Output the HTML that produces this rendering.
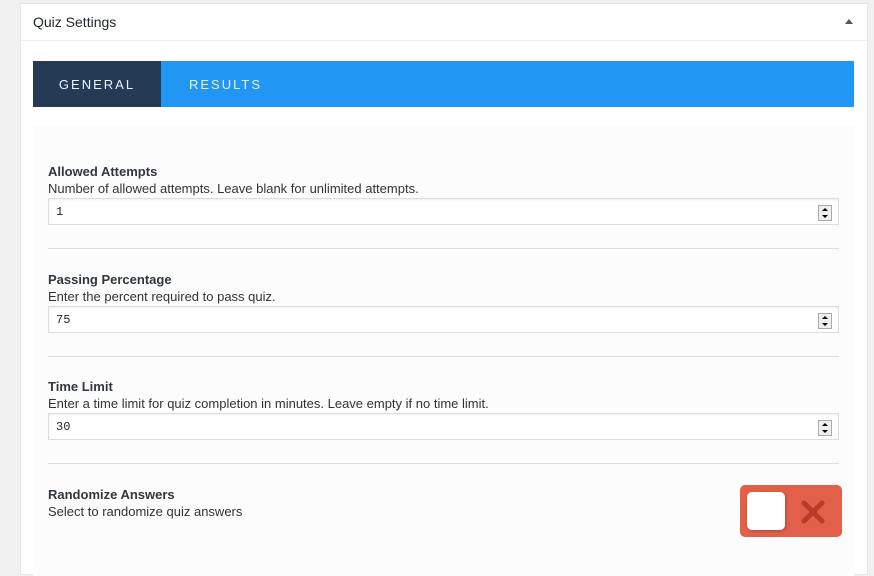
<!DOCTYPE html>
<html><head><style>
body{margin:0;background:#f1f1f1;font-family:"Liberation Sans",sans-serif;color:#23282d;width:874px;height:561px;overflow:hidden;position:relative}
.panel{position:absolute;left:20px;top:3px;width:846px;height:570px;background:#fff;border:1px solid #e5e5e5}
.hd{height:36px;border-bottom:1px solid #eee;font-size:14px;line-height:37px;padding-left:12px}
.arrow{position:absolute;right:14px;top:15px;width:0;height:0;border-left:4px solid transparent;border-right:4px solid transparent;border-bottom:5px solid #555}
.tabs{position:absolute;left:12px;top:57px;width:821px;height:46px;background:#2196f3}
.tab{position:absolute;top:0;height:46px;line-height:47px;font-size:13px;letter-spacing:2px;color:#e8f2ff}
.t1{left:0;width:128px;background:#253a55;text-align:center}
.t2{left:156px}
.body{position:absolute;left:12px;top:122px;width:821px;height:450px;background:#fcfcfc}
.f{position:absolute;left:15px;width:791px}
.f b{display:block;font-size:13px;color:#32373c}
.f .d{font-size:13px;color:#333;margin-top:2px}
.inp{margin-top:2px;height:25px;border:1px solid #ddd;background:#fff;font-family:"Liberation Mono",monospace;font-size:12px;line-height:27px;padding-left:7px;position:relative;box-shadow:inset 0 1px 2px rgba(0,0,0,.07)}
.sp{position:absolute;right:6px;top:6px;width:12px;height:14px;border:1px solid #aaa;background:#eee}
.sp:before{content:"";position:absolute;left:3px;top:2px;border-left:3px solid transparent;border-right:3px solid transparent;border-bottom:3px solid #000}
.sp:after{content:"";position:absolute;left:3px;top:9px;border-left:3px solid transparent;border-right:3px solid transparent;border-top:3px solid #000}
.sep{position:absolute;left:15px;width:791px;height:1px;background:#ddd}
.tog{position:absolute;left:707px;top:359px;width:102px;height:52px;background:#e2604a;border-radius:5px}
.knob{position:absolute;left:7px;top:7px;width:38px;height:38px;background:#fff;border-radius:5px;box-shadow:1px 1px 3px rgba(0,0,0,.25)}
</style></head><body>
<div class="panel">
<div class="hd">Quiz Settings</div><div class="arrow"></div>
<div class="tabs"><div class="tab t1">GENERAL</div><div class="tab t2">RESULTS</div></div>
<div class="body">
<div class="f" style="top:38px"><b>Allowed Attempts</b><div class="d">Number of allowed attempts. Leave blank for unlimited attempts.</div><div class="inp">1<div class="sp"></div></div></div>
<div class="sep" style="top:122px"></div>
<div class="f" style="top:146px"><b>Passing Percentage</b><div class="d">Enter the percent required to pass quiz.</div><div class="inp">75<div class="sp"></div></div></div>
<div class="sep" style="top:230px"></div>
<div class="f" style="top:253px"><b>Time Limit</b><div class="d">Enter a time limit for quiz completion in minutes. Leave empty if no time limit.</div><div class="inp">30<div class="sp"></div></div></div>
<div class="sep" style="top:337px"></div>
<div class="f" style="top:361px"><b>Randomize Answers</b><div class="d">Select to randomize quiz answers</div></div>
<div class="tog"><div class="knob"></div>
<svg style="position:absolute;left:60px;top:15px" width="26" height="24" viewBox="0 0 26 24"><path d="M4 3L22 21M22 3L4 21" stroke="#b83a28" stroke-width="5" stroke-linecap="round"/></svg></div>
</div>
</div>
</body></html>
